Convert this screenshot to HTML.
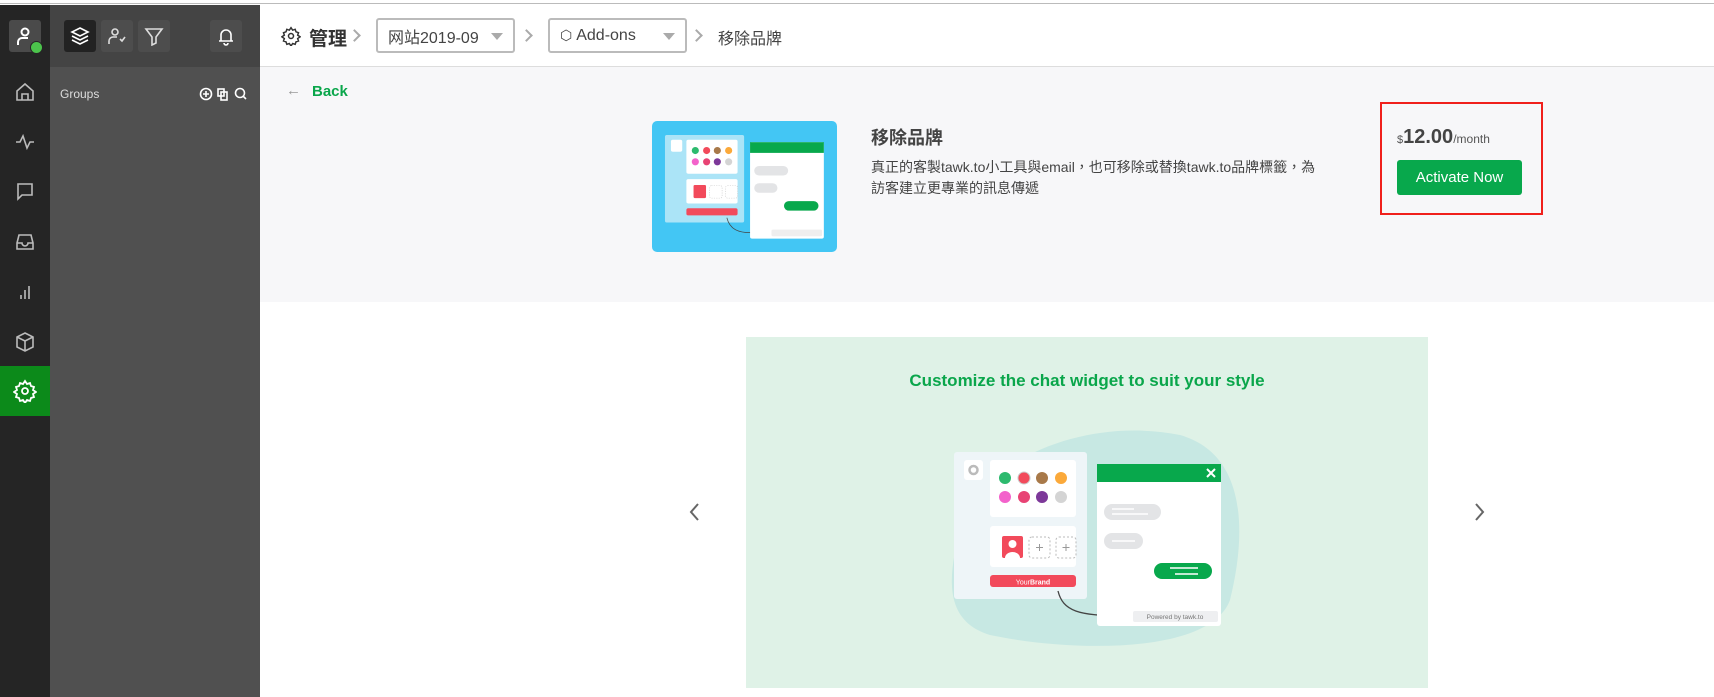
<!DOCTYPE html>
<html><head><meta charset="utf-8"><style>
*{margin:0;padding:0;box-sizing:border-box}
body{width:1714px;height:697px;overflow:hidden;background:#fff;font-family:"Liberation Sans","Noto Sans CJK TC",sans-serif;position:relative}
.a{position:absolute}
.box{position:absolute;width:32px;height:32px;border-radius:3px;background:#4d4d4d;display:flex;align-items:center;justify-content:center}
.ri{position:absolute;left:13px;width:24px;height:24px}
.dd{position:absolute;top:18px;height:35px;border:2px solid #bbb;border-radius:3px;font-size:16px;color:#444;padding:0 10px;background:#fff;display:flex;align-items:center;gap:4px}
.dd:after{content:"";position:absolute;right:10px;top:13px;border:6px solid transparent;border-top:7px solid #aaa}
.chev{position:absolute;top:31px;width:9px;height:9px;border-right:2px solid #aaa;border-top:2px solid #aaa;transform:rotate(45deg)}
</style></head><body>
<div class="a" style="left:0;top:0;width:1714px;height:4px;background:#fff;border-bottom:1px solid #bbb"></div>
<div class="a" style="left:0;top:5px;width:50px;height:692px;background:#252525"></div>
<div class="a" style="left:50px;top:5px;width:210px;height:62px;background:#444"></div>
<div class="a" style="left:50px;top:67px;width:210px;height:630px;background:#505050"></div>
<div class="box" style="left:9px;top:20px;background:#4a4a4a"><svg width="20" height="20" viewBox="0 0 20 20" fill="none" stroke="#fff" stroke-width="2"><circle cx="10" cy="6" r="3.5"/><path d="M3 19v-3a4 4 0 0 1 4-4h6"/></svg></div>
<div class="a" style="left:30px;top:41px;width:13px;height:13px;border-radius:50%;background:#4cc44c;border:1px solid #252525"></div>
<div class="box" style="left:64px;top:20px;background:#222"><svg width="20" height="20" viewBox="0 0 20 20" fill="none" stroke="#fff" stroke-width="1.6"><path d="M10 2l8 4-8 4-8-4z M2 10l8 4 8-4 M2 14l8 4 8-4"/></svg></div>
<div class="box" style="left:101px;top:20px"><svg width="20" height="20" viewBox="0 0 20 20" fill="none" stroke="#ddd" stroke-width="1.6"><circle cx="8" cy="6" r="3"/><path d="M2 18v-3a4 4 0 0 1 4-4h4 M13 13l2 2 3-4"/></svg></div>
<div class="box" style="left:138px;top:20px"><svg width="20" height="20" viewBox="0 0 20 20" fill="none" stroke="#ddd" stroke-width="1.6"><path d="M2 3h16l-6 8v6l-4 2v-8z"/></svg></div>
<div class="box" style="left:210px;top:20px"><svg width="20" height="20" viewBox="0 0 20 20" fill="none" stroke="#fff" stroke-width="1.6"><path d="M5 15V9a5 5 0 0 1 10 0v6h2H3z M8 17a2 2 0 0 0 4 0"/></svg></div>
<div class="a" style="left:60px;top:87px;font-size:12px;color:#ddd">Groups</div>
<svg class="a" style="left:199px;top:87px" width="52" height="14" viewBox="0 0 52 14" fill="none" stroke="#fff" stroke-width="1.6"><circle cx="7" cy="7" r="5.5"/><path d="M7 4v6M4 7h6"/><rect x="19" y="2" width="6" height="7"/><rect x="22" y="5" width="6" height="8"/><circle cx="41" cy="6" r="4.5"/><path d="M44 9l3 3"/></svg>
<svg class="ri" style="top:80px" viewBox="0 0 24 24" fill="none" stroke="#bbb" stroke-width="1.6"><path d="M4 11l8-7 8 7v9H4z M9 20v-6h6v6"/></svg>
<svg class="ri" style="top:130px" viewBox="0 0 24 24" fill="none" stroke="#bbb" stroke-width="1.6"><path d="M3 12h4l3-6 4 12 3-6h4"/></svg>
<svg class="ri" style="top:179px" viewBox="0 0 24 24" fill="none" stroke="#bbb" stroke-width="1.6"><path d="M5 5h14v11H9l-4 4z"/></svg>
<svg class="ri" style="top:230px" viewBox="0 0 24 24" fill="none" stroke="#bbb" stroke-width="1.6"><path d="M4 13l2-8h12l2 8v6H4z M4 13h5a3 3 0 0 0 6 0h5"/></svg>
<svg class="ri" style="top:280px" viewBox="0 0 24 24" fill="none" stroke="#bbb" stroke-width="1.6"><path d="M8 19v-4M12 19V10M16 19V6"/></svg>
<svg class="ri" style="top:330px" viewBox="0 0 24 24" fill="none" stroke="#bbb" stroke-width="1.6"><path d="M12 3l8 4v10l-8 4-8-4V7z M4 7l8 4 8-4 M12 11v10"/></svg>
<div class="a" style="left:0;top:366px;width:50px;height:50px;background:#0c8a1a"></div>
<svg class="ri" style="top:379px" viewBox="0 0 24 24" fill="none" stroke="#fff" stroke-width="1.8"><circle cx="12" cy="12" r="3"/><path d="M12 2l2 3 3-1 1 3 3 1-1 3 3 2-3 2 1 3-3 1-1 3-3-1-2 3-2-3-3 1-1-3-3-1 1-3-3-2 3-2-1-3 3-1 1-3 3 1z"/></svg>
<!-- header -->
<div class="a" style="left:260px;top:66px;width:1454px;height:1px;background:#ddd"></div>
<svg class="a" style="left:281px;top:26px" width="20" height="20" viewBox="0 0 24 24" fill="none" stroke="#333" stroke-width="1.8"><circle cx="12" cy="12" r="3"/><path d="M12 2l2 3 3-1 1 3 3 1-1 3 3 2-3 2 1 3-3 1-1 3-3-1-2 3-2-3-3 1-1-3-3-1 1-3-3-2 3-2-1-3 3-1 1-3 3 1z"/></svg>
<div class="a" style="left:309px;top:24px;font-size:19px;font-weight:bold;color:#333">管理</div>
<div class="chev" style="left:350px"></div>
<div class="dd" style="left:376px;width:139px">网站2019-09</div>
<div class="chev" style="left:522px"></div>
<div class="dd" style="left:548px;width:139px"><span style="font-size:14px">⬡</span>Add-ons</div>
<div class="chev" style="left:692px"></div>
<div class="a" style="left:718px;top:25px;font-size:16px;color:#444">移除品牌</div>
<!-- top section -->
<div class="a" style="left:260px;top:67px;width:1454px;height:235px;background:#f7f7f9"></div>
<div class="a" style="left:286px;top:82px;font-size:15px;color:#999">←</div>
<div class="a" style="left:312px;top:83px;font-size:15px;font-weight:bold;color:#0aa64b">Back</div>
<svg class="a" style="left:652px;top:121px" width="186" height="132" viewBox="652 121 186 132">
<rect x="652" y="121" width="185" height="131" rx="5" fill="#43c6f4"/>
<g transform="translate(650.7 116) scale(0.595)">
<rect x="24" y="32" width="133" height="147" rx="3" fill="#abe4f7"/>
<rect x="34" y="40" width="19" height="20" rx="3" fill="#fff"/>
<rect x="60" y="40" width="86" height="57" rx="3" fill="#fff"/>
<circle cx="75" cy="58" r="6" fill="#2dba6e"/><circle cx="94" cy="58" r="6" fill="#f24a5b"/><circle cx="112" cy="58" r="6" fill="#a87949"/><circle cx="131" cy="58" r="6" fill="#fba93a"/>
<circle cx="75" cy="77" r="6" fill="#f362cb"/><circle cx="94" cy="77" r="6" fill="#e84374"/><circle cx="112" cy="77" r="6" fill="#7d3899"/><circle cx="131" cy="77" r="6" fill="#d4d4d4"/>
<rect x="60" y="106" width="86" height="41" rx="3" fill="#fff"/>
<rect x="72" y="116" width="21" height="22" rx="2" fill="#f24a5b"/>
<rect x="99" y="117" width="21" height="21" rx="3" fill="none" stroke="#ccc" stroke-dasharray="2 2"/>
<rect x="126" y="117" width="20" height="21" rx="3" fill="none" stroke="#ccc" stroke-dasharray="2 2"/>
<rect x="60" y="155" width="86" height="12" rx="3" fill="#f24a5b"/>
<path d="M128 171c5 20 20 25 40 25" fill="none" stroke="#444" stroke-width="1.2"/>
<rect x="167" y="44" width="124" height="162" rx="3" fill="#fff"/>
<rect x="167" y="44" width="124" height="18" fill="#08a84c"/>
<rect x="174" y="84" width="57" height="16" rx="8" fill="#e3e4e6"/>
<rect x="174" y="113" width="39" height="16" rx="8" fill="#e3e4e6"/>
<rect x="224" y="143" width="58" height="16" rx="8" fill="#08a84c"/>
<rect x="203" y="191" width="85" height="11" rx="2" fill="#eee"/>
</g></svg>
<div class="a" style="left:871px;top:124px;font-size:18px;font-weight:bold;color:#444">移除品牌</div>
<div class="a" style="left:871px;top:157px;width:450px;font-size:14px;line-height:21px;color:#444">真正的客製tawk.to小工具與email，也可移除或替換tawk.to品牌標籤，為訪客建立更專業的訊息傳遞</div>
<div class="a" style="left:1380px;top:102px;width:163px;height:113px;border:2px solid #f0201c"></div>
<div class="a" style="left:1397px;top:126px;color:#555;font-size:11px;white-space:nowrap">$<span style="font-size:20px;font-weight:bold;color:#444">12.00</span><span style="font-size:12px">/month</span></div>
<div class="a" style="left:1397px;top:160px;width:125px;height:35px;background:#08a84c;border-radius:3px;color:#fff;font-size:15px;text-align:center;line-height:35px">Activate Now</div>
<!-- carousel -->
<div class="a" style="left:746px;top:337px;width:682px;height:351px;background:#dff2e7"></div>
<div class="a" style="left:746px;top:371px;width:682px;text-align:center;font-size:17px;font-weight:bold;color:#0aa64b">Customize the chat widget to suit your style</div>
<svg class="a" style="left:688px;top:502px" width="14" height="20" viewBox="0 0 14 20" fill="none" stroke="#666" stroke-width="2"><path d="M10 2L3 10l7 8"/></svg>
<svg class="a" style="left:1472px;top:502px" width="14" height="20" viewBox="0 0 14 20" fill="none" stroke="#666" stroke-width="2"><path d="M4 2l7 8-7 8"/></svg>
<svg class="a" style="left:930px;top:420px" width="320" height="240" viewBox="0 0 320 240">
<path d="M30 110C45 45 150 -5 250 15C320 35 315 120 300 180C280 235 140 232 60 215C10 200 20 150 30 110z" fill="#c7e8e3"/>
<rect x="24" y="32" width="133" height="147" rx="3" fill="#eef5f8"/>
<rect x="34" y="40" width="19" height="20" rx="3" fill="#fff"/>
<circle cx="43.5" cy="50" r="4" fill="none" stroke="#bbb" stroke-width="2.5"/>
<rect x="60" y="40" width="86" height="57" rx="3" fill="#fff"/>
<circle cx="75" cy="58" r="6" fill="#2dba6e"/><circle cx="94" cy="58" r="6" fill="#f24a5b" stroke="#ccc"/><circle cx="112" cy="58" r="6" fill="#a87949"/><circle cx="131" cy="58" r="6" fill="#fba93a"/>
<circle cx="75" cy="77" r="6" fill="#f362cb"/><circle cx="94" cy="77" r="6" fill="#e84374"/><circle cx="112" cy="77" r="6" fill="#7d3899"/><circle cx="131" cy="77" r="6" fill="#d4d4d4"/>
<rect x="60" y="106" width="86" height="41" rx="3" fill="#fff"/>
<rect x="72" y="116" width="21" height="22" rx="2" fill="#f24a5b"/>
<circle cx="82.5" cy="124" r="4" fill="#fff"/><path d="M75 138a7.5 6 0 0 1 15 0z" fill="#fff"/>
<rect x="99" y="117" width="21" height="21" rx="3" fill="none" stroke="#bbb" stroke-dasharray="2 2"/>
<rect x="126" y="117" width="20" height="21" rx="3" fill="none" stroke="#bbb" stroke-dasharray="2 2"/>
<path d="M109.5 124v7M106 127.5h7M136 124v7M132.5 127.5h7" stroke="#999"/>
<rect x="60" y="155" width="86" height="12" rx="3" fill="#f24a5b"/>
<text x="103" y="164.5" font-size="7" fill="#fff" text-anchor="middle" font-family="Liberation Sans">Your<tspan font-weight="bold">Brand</tspan></text>
<path d="M128 171c5 20 20 25 67 25" fill="none" stroke="#444" stroke-width="1.3"/><path d="M191 192l5 4-5 4" fill="none" stroke="#444" stroke-width="1.3"/>
<rect x="167" y="44" width="124" height="162" rx="3" fill="#fff"/>
<rect x="167" y="44" width="124" height="18" fill="#08a84c"/>
<path d="M277 49l8 8M285 49l-8 8" stroke="#fff" stroke-width="2"/>
<rect x="174" y="84" width="57" height="16" rx="8" fill="#e3e4e6"/><path d="M182 89h22M182 94h36" stroke="#fff" stroke-width="1.5"/>
<rect x="174" y="113" width="39" height="16" rx="8" fill="#e3e4e6"/><path d="M182 121h23" stroke="#fff" stroke-width="1.5"/>
<rect x="224" y="143" width="58" height="16" rx="8" fill="#08a84c"/><path d="M240 148h28M245 154h23" stroke="#fff" stroke-width="1.5"/>
<rect x="203" y="191" width="85" height="11" rx="2" fill="#eeeff1"/>
<text x="245" y="199" font-size="6.5" fill="#777" text-anchor="middle" font-family="Liberation Sans">Powered by tawk.to</text>
</svg>
</body></html>
